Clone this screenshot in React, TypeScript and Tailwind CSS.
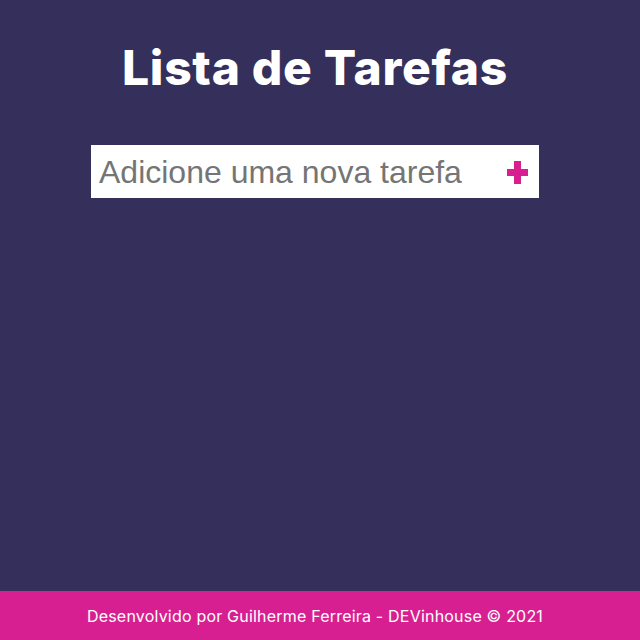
export default function App() {
    return (
        <div className="min-h-screen flex flex-col bg-[#342f5b]">
            <main className="flex-1 flex flex-col items-center pr-[10px]">
                <h1 className="mt-[40px] text-[48px] leading-[56px] font-extrabold text-white font-['Inter',sans-serif] tracking-[0.7px]">
                    Lista de Tarefas
                </h1>
                <div className="mt-[49px] w-[448px] h-[53px] bg-white flex items-center pl-[8px] pr-[10px]">
                    <input
                        className="flex-1 min-w-0 outline-none text-[32px] text-[#333] placeholder:text-[#757575] font-['Liberation_Sans',Arial,sans-serif]"
                        placeholder="Adicione uma nova tarefa"
                    />
                    <button className="w-[24px] h-[24px] mt-[2px] flex items-center justify-center">
                        <svg width="21" height="23" viewBox="0 0 21 23">
                            <rect x="7" y="0" width="7" height="23" fill="#d81f91" />
                            <rect x="0" y="8" width="21" height="7" fill="#d81f91" />
                        </svg>
                    </button>
                </div>
            </main>
            <footer className="h-[49px] bg-[#d81f91] flex items-center justify-center pr-[10px] text-white text-[16px] tracking-[0.2px] font-['Inter',sans-serif]">
                Desenvolvido por Guilherme Ferreira - DEVinhouse © 2021
            </footer>
        </div>
    );
}
